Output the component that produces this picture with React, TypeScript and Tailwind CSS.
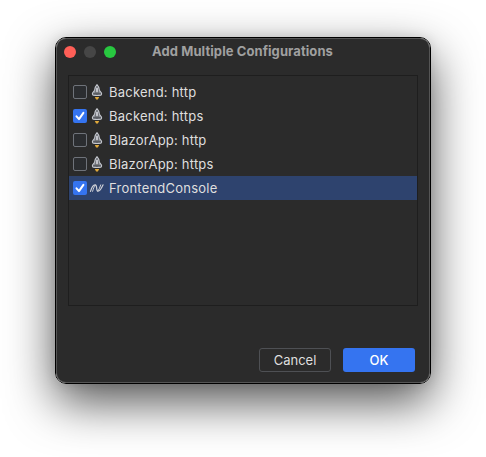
type Kind = "rocket" | "dotnet";

interface Config {
  name: string;
  kind: Kind;
  checked: boolean;
  selected?: boolean;
}

const configs: Config[] = [
  { name: "Backend: http", kind: "rocket", checked: false },
  { name: "Backend: https", kind: "rocket", checked: true },
  { name: "BlazorApp: http", kind: "rocket", checked: false },
  { name: "BlazorApp: https", kind: "rocket", checked: false },
  { name: "FrontendConsole", kind: "dotnet", checked: true, selected: true },
];

function RocketIcon() {
  return (
    <svg width="16" height="16" viewBox="0 0 16 16" fill="none">
      <path
        d="M8 .7C6.5 2.2 5.8 4 5.6 6.2L3.7 8.9c-.5.7-.3 2 .5 2.2 2.4.5 5.2.5 7.6 0 .8-.2 1-1.5.5-2.2l-1.9-2.7C10.2 4 9.5 2.2 8 .7Z"
        fill="#5a5d63"
        stroke="#c4c7ce"
        strokeWidth="1.1"
        strokeLinejoin="round"
      />
      <path d="M5.8 6.2v2.6M10.2 6.2v2.6" stroke="#b4b8bf" strokeWidth=".9" />
      <path d="M8 4.4v3.2" stroke="#ced0d6" strokeWidth="1.8" strokeLinecap="round" />
      <path d="M5.8 12.9h4.4L8.9 15.4H7.1Z" fill="#e0a93b" />
    </svg>
  );
}

function DotnetIcon() {
  return (
    <svg width="16" height="16" viewBox="0 0 16 16" fill="none" strokeLinecap="round">
      <path
        d="M1.5 11.3C2.4 8.2 3.6 4.8 6 4.8c2.9 0 .5 6.4 3.1 6.4 2.3 0 3.6-3.4 4.9-6.3"
        stroke="#ced0d6"
        strokeWidth="1.2"
      />
      <path d="M3.6 11.3C4.3 9 5 6.6 6.3 5M9 11c1.1-1.5 2-3.8 2.7-6.1" stroke="#ced0d6" strokeWidth="1" />
    </svg>
  );
}

function Checkbox({ checked }: { checked: boolean }) {
  if (!checked) {
    return <span className="size-3.5 rounded-[2px] border border-[#6f737a] bg-[#2b2d30]" />;
  }
  return (
    <span className="flex size-3.5 items-center justify-center rounded-[2px] bg-[#3574f0]">
      <svg width="14" height="14" viewBox="0 0 14 14" fill="none">
        <path
          d="M3.5 7.3l2.5 2.8 4.4-6.2"
          stroke="#fff"
          strokeWidth="2"
          strokeLinecap="round"
          strokeLinejoin="round"
        />
      </svg>
    </span>
  );
}

export default function App() {
  return (
    <div className="h-[457px] w-[486px] overflow-hidden bg-white pt-[37px] pl-[55px] font-['Inter','Liberation_Sans',sans-serif] text-[13px]">
      <div className="h-[347px] w-[376px] rounded-[11px] border border-black shadow-[0_18px_48px_rgba(0,0,0,0.68),0_0_12px_rgba(0,0,0,0.1)]">
        <div className="flex h-full flex-col rounded-[10px] border border-[#555] bg-[#2b2b2b]">
          <header className="grid h-[26px] grid-cols-[1fr_auto_1fr] items-center pl-[7px]">
            <div className="flex gap-2">
              <span className="size-3 rounded-full bg-[#ff5f57]" />
              <span className="size-3 rounded-full bg-[#464646]" />
              <span className="size-3 rounded-full bg-[#28c840]" />
            </div>
            <h1 className="mr-[8px] whitespace-nowrap font-bold tracking-[0.08px] text-[#a0a0a0]">
              Add Multiple Configurations
            </h1>
          </header>
          <ul className="mx-[11px] mt-[10px] h-[231px] border border-[#1e1e1e] pt-1">
            {configs.map((c) => (
              <li
                key={c.name}
                className={`flex h-6 items-center pl-1 text-[#dfdfdf] ${c.selected ? "bg-[#2e436e]" : ""}`}
              >
                <Checkbox checked={c.checked} />
                <span className="ml-0.5">{c.kind === "rocket" ? <RocketIcon /> : <DotnetIcon />}</span>
                <span className="ml-1 pt-0.5 tracking-[0.22px]">{c.name}</span>
              </li>
            ))}
          </ul>
          <footer className="mt-[42px] mr-3.5 flex justify-end gap-3">
            <button className="h-6 w-[72px] rounded-[3px] border border-[#4e5054] pt-0.5 text-[#dfdfdf]">Cancel</button>
            <button className="h-6 w-[72px] rounded-[3px] bg-[#3574f0] pt-0.5 font-medium text-white">OK</button>
          </footer>
        </div>
      </div>
    </div>
  );
}
